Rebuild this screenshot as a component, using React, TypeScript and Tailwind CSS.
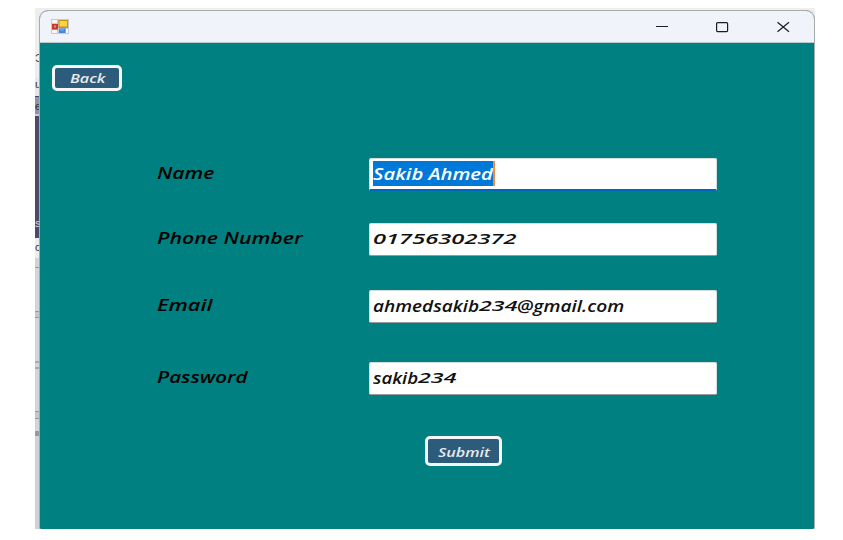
import React, { useLayoutEffect, useRef, useState } from "react";

/* Wide handwriting style text, stretched horizontally to the width of its box. */
function Script({ text, box, font = "text-[17px]" }: { text: string; box: string; font?: string }) {
  const outer = useRef<HTMLSpanElement>(null);
  const inner = useRef<HTMLSpanElement>(null);
  const [scale, setScale] = useState(1);
  useLayoutEffect(() => {
    if (outer.current && inner.current) {
      setScale(outer.current.offsetWidth / inner.current.offsetWidth);
    }
  }, [text]);
  return (
    <span ref={outer} className={`block shrink-0 whitespace-nowrap text-left leading-6 ${box}`}>
      <span
        ref={inner}
        className={`inline-block origin-left font-['Open_Sans',sans-serif] font-semibold italic leading-6 ${font}`}
        style={{ transform: `scaleX(${scale})` }}
      >
        {text}
      </span>
    </span>
  );
}

const digits = "text-[13.5px] relative -top-px";

function Row({ label, gap, focused, children }: { label: React.ReactNode; gap: string; focused?: boolean; children: React.ReactNode }) {
  return (
    <div className={`flex h-[33px] items-center ${gap}`}>
      <div className="w-[212px] pb-[4px] text-black">{label}</div>
      <div
        className={`flex h-[33px] w-[348px] items-center rounded-[2px] border border-[#d5dddd] bg-white pb-px pl-[3px] text-[#111] ${
          focused ? "border-b-2 border-b-[#0067c0]" : "border-b-[#999]"
        }`}
      >
        {children}
      </div>
    </div>
  );
}

function Button({ children, className }: { children: React.ReactNode; className: string }) {
  return (
    <button className={`flex items-center justify-center rounded-[5px] border-[3px] border-[#f5f6f6] bg-[#2c5b7b] text-[#e8eaec] ${className}`}>
      {children}
    </button>
  );
}

function FormIcon() {
  return (
    <svg width="18" height="15" viewBox="0 0 18 15">
      <rect width="18" height="15" fill="#c9c9cd" />
      <path d="M1 1h5v3H1zM1 11h5v3H1zM15 10h2v4h-2z" fill="#f8f8fa" />
      <rect x="1" y="5" width="6" height="5.5" fill="#c63a2c" />
      <rect x="3" y="6.5" width="2" height="2" fill="#ef8b77" />
      <rect x="7.5" y="1" width="9.5" height="8" fill="#cb9110" />
      <rect x="8.5" y="2" width="7.5" height="5.5" fill="#f8d545" />
      <rect x="8" y="9.5" width="6.5" height="4.5" fill="#4386e8" />
      <path d="M9 10.5h4v1H9z" fill="#83b4f8" />
    </svg>
  );
}

export default function App() {
  return (
    <div className="h-[540px] w-[843px] overflow-hidden bg-white pl-[35px] pt-2">
      <div className="flex h-[521px] w-[780px] bg-[#eeeeee]">
        <div className="mr-[-4px] w-2 shrink-0 overflow-hidden font-['Liberation_Sans',sans-serif] text-[11px] leading-3 text-[#333]">
          <div className="h-[70px] bg-[#eeeeee] pt-[44px]">Ɔ</div>
          <div className="h-[18px] bg-[#e5e5e7]">u</div>
          <div className="h-[20px] border-b-2 border-t border-b-[#ccc] border-t-[#46466d] bg-[#8995ad] pt-[3px]">e</div>
          <div className="h-[122px] bg-[#4b4a6b] pt-[101px] text-[#ddd]">s</div>
          <div className="h-[20px] bg-[#ececec] pt-[3px]">c</div>
          <div className="h-[9px] bg-[#ced4da]" />
          <div className="h-[44px] border-t border-[#999] bg-[#d2d4d5]" />
          <div className="h-[7px] border-y border-[#999] bg-[#c5c6c9]" />
          <div className="h-[43px] bg-[#d2d4d5]" />
          <div className="h-[8px] border-y-2 border-[#aaa] bg-[#d2d4d5]" />
          <div className="h-[42px] bg-[#d2d4d5]" />
          <div className="h-[8px] border-y border-[#999] bg-[#c5c6c9]" />
          <div className="h-[12px] bg-[#d2d4d5]" />
          <div className="h-[5px] bg-[#999]" />
          <div className="h-[93px] bg-[#d2d2d3]" />
        </div>
        <div className="z-10 mt-[2px] flex w-[776px] flex-col overflow-hidden rounded-t-[9px] rounded-b-[2px] border border-b-0 border-[#a9aaaa] bg-[#008080]">
          <header className="flex h-8 shrink-0 items-center border-b border-[#b9cccd] bg-[#f0f3fa] pl-[11px]">
            <FormIcon />
            <svg className="ml-auto mr-[24px]" width="136" height="14" viewBox="0 0 136 14" fill="none" stroke="#1d1d1f" strokeWidth="1.2">
              <path d="M2 6.5h12" />
              <rect x="62.6" y="2.6" width="11" height="9" rx="1" />
              <path d="M123.5 2.3l11.5 9.4M135 2.3l-11.5 9.4" />
            </svg>
          </header>
          <main className="flex flex-col pl-[12px] pt-[22px]">
            <Button className="h-[26px] w-[70px]">
              <Script text="Back" box="w-[35px]" font="text-[12px]" />
            </Button>
            <div className="flex flex-col pl-[105px] pt-[67px]">
              <Row gap="" focused label={<Script text="Name" box="w-[57px]" />}>
                <div className="flex h-[25px] w-[122px] items-center border-r-2 border-[#ef8b3e] bg-[#0078d7] text-white">
                  <Script text="Sakib Ahmed" box="w-[120px]" />
                </div>
              </Row>
              <Row gap="mt-[32px]" label={<Script text="Phone Number" box="w-[146px]" />}>
                <Script text="01756302372" box="w-[144px]" font={digits} />
              </Row>
              <Row gap="mt-[34px]" label={<Script text="Email" box="w-[55px]" />}>
                <Script text="ahmedsakib" box="w-[106px]" />
                <Script text="234" box="w-[38px]" font={digits} />
                <Script text="@gmail.com" box="w-[107px]" />
              </Row>
              <Row gap="mt-[39px]" label={<Script text="Password" box="w-[91px]" />}>
                <Script text="sakib" box="w-[45px]" />
                <Script text="234" box="w-[38px]" font={digits} />
              </Row>
            </div>
            <div className="pl-[373px] pt-[41px]">
              <Button className="h-[30px] w-[77px]">
                <Script text="Submit" box="w-[52px]" font="text-[13px]" />
              </Button>
            </div>
          </main>
        </div>
      </div>
    </div>
  );
}
